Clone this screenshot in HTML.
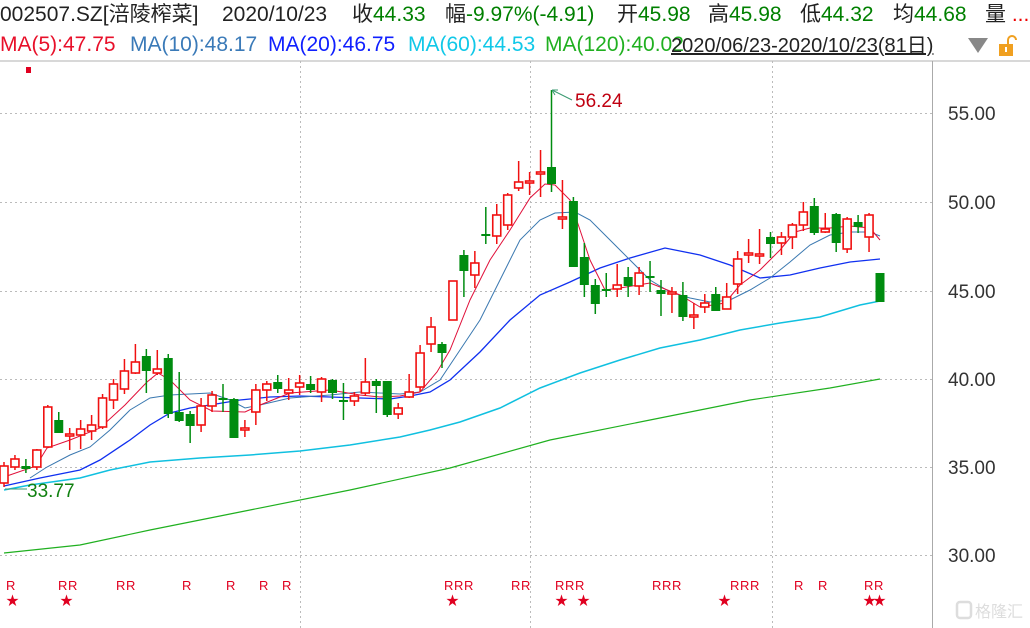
<!DOCTYPE html>
<html><head><meta charset="utf-8"><style>
body{margin:0;width:1030px;height:628px;overflow:hidden;background:#fff;font-family:"Liberation Sans","Noto Sans CJK SC",sans-serif;position:relative}
.t{position:absolute;white-space:nowrap;font-size:21px;line-height:24px;top:3px;color:#222}
.g{color:#008000}
.m{position:absolute;white-space:nowrap;font-size:21px;line-height:24px;top:33px}
</style></head><body>
<div class="t" style="left:0">002507.SZ[涪陵榨菜]</div>
<div class="t" style="left:222px">2020/10/23</div>
<div class="t" style="left:352px">收<span class="g">44.33</span></div>
<div class="t" style="left:445px">幅<span class="g">-9.97%(-4.91)</span></div>
<div class="t" style="left:617px">开<span class="g">45.98</span></div>
<div class="t" style="left:708px">高<span class="g">45.98</span></div>
<div class="t" style="left:800px">低<span class="g">44.32</span></div>
<div class="t" style="left:893px">均<span class="g">44.68</span></div>
<div class="t" style="left:985px">量 <span style="color:#e00">...</span></div>
<div class="m" style="left:0;color:#e8102a">MA(5):47.75</div>
<div class="m" style="left:130px;color:#3a7ab8">MA(10):48.17</div>
<div class="m" style="left:268px;color:#1020ff">MA(20):46.75</div>
<div class="m" style="left:408px;color:#10c8e8">MA(60):44.53</div>
<div class="m" style="left:545px;color:#20b020">MA(120):40.02</div>
<div class="m" style="left:671px;top:34px;color:#222;text-decoration:underline;font-size:20px">2020/06/23-2020/10/23(81日)</div>
<svg style="position:absolute;left:0;top:0" width="1030" height="628" id="s"></svg>
<script>
var s=document.getElementById('s'),h='';
h+='<line x1="0" y1="61" x2="1030" y2="61" stroke="#b0b0b0"/>';
h+='<polygon points="968,38 988,38 978,53" fill="#888"/>';
h+='<rect x="999" y="44" width="14" height="12" fill="#f0a020"/><rect x="1005" y="47" width="2" height="5" fill="#fff"/><path d="M1008 44 v-4 a4 4 0 0 1 8 0" stroke="#f0a020" stroke-width="2" fill="none"/>';
h+='<line x1="932.5" y1="61" x2="932.5" y2="628" stroke="#aaa"/>';
var lv=[[55,113],[50,202],[45,291],[40,379],[35,467],[30,555]];
lv.forEach(function(a){h+='<line x1="0" y1="'+a[1]+'.5" x2="932" y2="'+a[1]+'.5" stroke="#bbb" stroke-dasharray="2,3"/>';h+='<text x="948" y="'+(a[1]+7)+'" font-size="19" fill="#333" font-family="Liberation Sans">'+a[0].toFixed(2)+'</text>';});
[300,530,772].forEach(function(x){h+='<line x1="'+x+'.5" y1="61" x2="'+x+'.5" y2="628" stroke="#bbb" stroke-dasharray="2,3"/>';});
function pl(p,c,w){h+='<polyline fill="none" stroke="'+c+'" stroke-width="'+w+'" points="'+p+'"/>';}
pl("4,553 80,545 150,530 250,510 350,490 450,468 550,440 650,420 750,400 830,388 880,379","#20b020",1.2);
pl("4,490 30,485 80,478 110,470 150,462 200,458 250,455 300,451 350,445 400,437 430,430 460,422 500,408 540,388 580,373 620,360 660,348 700,340 740,330 780,323 820,317 860,305 880,301","#10c0e0",1.5);
pl("4,486 40,478 80,470 100,460 130,440 150,425 170,413 190,408 210,405 240,400 270,397 300,396 330,397 360,398 390,399 410,396 430,392 450,380 480,352 510,320 540,295 570,282 600,268 630,258 665,248 700,255 730,265 760,278 790,275 820,268 850,262 880,259","#1030f0",1.3);
pl("30,478 47,467 70,455 90,447 110,430 130,410 150,398 170,395 210,393 230,400 245,408 260,405 290,398 330,395 360,392 400,394 420,392 440,380 460,350 480,320 500,280 520,240 540,220 555,213 575,212 590,220 610,240 630,260 650,280 670,292 690,298 710,302 730,300 750,290 770,278 790,262 810,245 830,235 850,232 870,232 880,236","#3a78b0",1);
pl("4,477 36,466 47,448 70,440 100,428 125,405 147,382 158,373 170,380 190,400 212,411 245,412 260,405 290,393 330,390 360,395 380,397 400,396 420,392 437,372 450,350 470,300 490,260 510,230 530,198 545,184 555,185 570,200 580,230 590,260 605,290 620,288 650,283 680,295 700,307 725,303 740,285 760,270 780,250 795,232 810,228 830,228 850,226 870,228 880,240","#e0103a",1);
var c=[[466,483,462,487,1],[459,467,455,470,1],[466,469,459,473,0],[450,467,449,470,1],[407,447,405,447,1],[420,433,412,433,0],[434,436,428,450,1],[429,435,420,449,1],[425,431,415,440,1],[398,427,394,429,1],[384,400,379,409,1],[371,389,359,394,1],[362,373,344,374,1],[356,371,349,393,0],[369,373,350,375,1],[358,414,354,418,0],[412,421,372,422,0],[414,426,411,443,0],[406,425,398,432,1],[395,406,391,412,1],[398,400,384,412,0],[399,438,398,438,0],[428,430,420,437,1],[390,412,384,425,1],[384,390,381,401,1],[382,389,375,393,0],[390,393,378,400,1],[383,387,375,395,1],[384,390,376,393,0],[379,392,377,402,1],[380,393,379,399,0],[400,402,383,420,0],[396,401,392,406,1],[382,393,358,396,1],[381,386,379,413,0],[381,415,381,417,0],[408,414,403,419,1],[392,397,374,398,1],[353,387,345,392,1],[327,344,317,352,1],[344,353,342,368,0],[281,320,281,320,1],[255,271,250,297,0],[263,275,251,288,1],[234,236,207,244,0],[215,236,204,244,1],[195,225,193,230,1],[182,188,161,191,1],[181,183,172,195,1],[172,174,150,197,1],[167,184,90,192,0],[217,219,180,229,1],[201,267,197,267,0],[257,285,243,297,0],[285,304,279,314,0],[289,291,273,297,0],[285,289,264,297,1],[277,286,267,297,0],[273,286,267,295,1],[276,278,261,292,0],[290,294,280,316,0],[292,294,287,313,1],[295,317,282,321,0],[315,317,303,329,1],[303,307,294,313,1],[294,311,287,311,0],[297,309,283,309,1],[259,284,251,294,1],[253,255,239,263,1],[254,256,229,264,1],[237,244,232,258,0],[237,243,232,255,1],[225,237,223,249,1],[212,225,202,231,1],[206,233,198,235,0],[229,232,213,233,1],[214,243,213,252,0],[219,249,217,253,1],[222,227,215,233,0],[215,237,213,252,1],[273,302,273,302,0]];
c.forEach(function(d,i){var x=4+i*10.95,col=d[4]?'#f01010':'#008c10';
h+='<line x1="'+x+'" y1="'+d[2]+'" x2="'+x+'" y2="'+d[3]+'" stroke="'+col+'" stroke-width="1.5"/>';
var bh=Math.max(d[1]-d[0],1.5);
if(d[4])h+='<rect x="'+(x-4)+'" y="'+d[0]+'" width="8" height="'+bh+'" fill="#fff" stroke="'+col+'" stroke-width="1.6"/>';
else h+='<rect x="'+(x-4.5)+'" y="'+d[0]+'" width="9" height="'+bh+'" fill="'+col+'"/>';});
h+='<line x1="552" y1="90" x2="572" y2="100" stroke="#3a9a70"/><path d="M552 90 l6 0 M552 90 l3 5" stroke="#3a9a70"/>';
h+='<text x="575" y="107" font-size="19" fill="#c00010" font-family="Liberation Sans">56.24</text>';
h+='<line x1="5" y1="489" x2="27" y2="489" stroke="#3a9a70"/><text x="27" y="497" font-size="19" fill="#108010" font-family="Liberation Sans">33.77</text>';
h+='<rect x="26" y="67" width="5" height="6" fill="#e00020"/>';
var R=[10,62,72,120,130,186,230,263,286,448,458,468,515,525,559,569,579,656,666,676,734,744,754,798,822,868,878];
R.forEach(function(x){h+='<text x="'+(x-4)+'" y="590" font-size="13" fill="#e00020" font-family="Liberation Sans">R</text>';});
[12,66,452,561,583,724,869,879].forEach(function(x){h+='<text x="'+(x-6)+'" y="605" font-size="13" fill="#e00020">★</text>';});
h+='<rect x="957" y="602" width="14" height="16" rx="3" fill="none" stroke="#ddd" stroke-width="2.5"/><text x="975" y="617" font-size="16" fill="#ddd" font-family="Noto Sans CJK SC">格隆汇</text>';
s.innerHTML=h;
</script>
</body></html>
